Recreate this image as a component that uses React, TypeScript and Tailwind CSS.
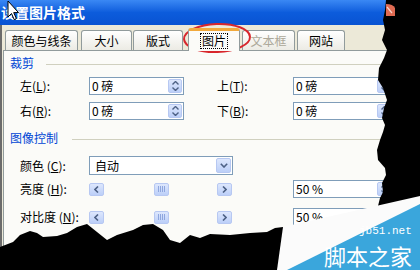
import React from "react";

const FONT = '"Noto Sans CJK SC", "Noto Sans", sans-serif';

function Tab({ label, w, ml, selected, disabled }: { label: string; w: number; ml: number; selected?: boolean; disabled?: boolean }) {
  if (selected) {
    return (
      <div
        style={{ width: w, marginLeft: ml }}
        className="relative z-10 -mb-px flex h-[23px] items-center justify-center rounded-t-[3px] border border-b-0 border-[#919b9c] border-t-[3px] border-t-[#f2a93b] bg-[#fbfbf8] text-[12px] text-black"
      >
        <span className="border border-dotted border-black px-[1px] leading-[14px]">{label}</span>
      </div>
    );
  }
  return (
    <div
      style={{ width: w, marginLeft: ml }}
      className={`flex h-[20px] items-center justify-center rounded-t-[3px] border border-b-0 border-[#919b9c] bg-linear-to-b from-[#ffffff] to-[#ecebe4] text-[12px] ${disabled ? "text-[#aca899]" : "text-black"}`}
    >
      {label}
    </div>
  );
}

function Label({ ch, k, w }: { ch: string; k: string; w: number }) {
  return (
    <div style={{ width: w }} className="shrink-0 text-[12px] leading-[14px] text-black">
      {ch}(<span className="underline">{k}</span>):
    </div>
  );
}

function Spinner() {
  return (
    <div className="absolute right-[1px] top-[1px] bottom-[1px] flex w-[14px] flex-col items-center justify-center gap-[2px] rounded-[2px] border border-[#b7c8f2] bg-linear-to-b from-[#dde7fd] to-[#bccff8]">
      <svg width="7" height="4" viewBox="0 0 7 4"><path d="M0.5 3.5 L3.5 0.5 L6.5 3.5" stroke="#4d6185" strokeWidth="1.4" fill="none" /></svg>
      <svg width="7" height="4" viewBox="0 0 7 4"><path d="M0.5 0.5 L3.5 3.5 L6.5 0.5" stroke="#4d6185" strokeWidth="1.4" fill="none" /></svg>
    </div>
  );
}

function NumBox({ value, w, h = 18 }: { value: string; w: number; h?: number }) {
  return (
    <div style={{ width: w, height: h }} className="relative shrink-0 border border-[#7f9db9] bg-white pl-[2px] text-[12px] leading-[16px] text-black">
      {value}
      <Spinner />
    </div>
  );
}

function ArrowBtn({ dir }: { dir: "l" | "r" }) {
  return (
    <div className="flex h-[13px] w-[15px] shrink-0 items-center justify-center rounded-[2px] border border-[#b7c8f2] bg-linear-to-b from-[#dde7fd] to-[#bccff8]">
      <svg width="5" height="7" viewBox="0 0 5 7">
        <path d={dir === "l" ? "M4 0.5 L1 3.5 L4 6.5" : "M1 0.5 L4 3.5 L1 6.5"} stroke="#4d6185" strokeWidth="1.6" fill="none" />
      </svg>
    </div>
  );
}

function ScrollBar() {
  return (
    <div className="flex h-[13px] w-[143px] shrink-0 items-center bg-[#fbfbf8]">
      <ArrowBtn dir="l" />
      <div className="ml-[50px] flex h-[13px] w-[15px] items-center justify-center gap-[1px] rounded-[2px] border border-[#b7c8f2] bg-linear-to-b from-[#dde7fd] to-[#bccff8]">
        <div className="h-[6px] w-px bg-[#8ea6de]" />
        <div className="h-[6px] w-px bg-[#8ea6de]" />
        <div className="h-[6px] w-px bg-[#8ea6de]" />
        <div className="h-[6px] w-px bg-[#8ea6de]" />
      </div>
      <div className="flex-1" />
      <ArrowBtn dir="r" />
    </div>
  );
}

function GroupTitle({ text, lineGap }: { text: string; lineGap: number }) {
  return (
    <div className="flex h-[14px] items-center pl-[6px]">
      <span className="text-[12px] leading-[14px] text-[#0046d5]">{text}</span>
      <div style={{ marginLeft: lineGap }} className="mt-[2px] h-px flex-1 bg-[#d0d0bf]" />
    </div>
  );
}

export default function App() {
  return (
    <div className="relative h-[270px] w-[420px] overflow-hidden bg-[#ece9d8]" style={{ fontFamily: FONT }}>
      {/* title bar */}
      <div className="flex h-[25px] items-center bg-linear-to-b from-[#3a88f4] via-[#0c5cdc] to-[#0953d2] pl-[1px] text-[14px] font-bold text-white">
        设置图片格式
      </div>

      {/* body */}
      <div className="flex h-[245px] flex-col border-l-2 border-[#6b6b6b]">
        {/* tabs */}
        <div className="ml-[3px] flex h-[25px] items-end">
          <Tab label="颜色与线条" w={73} ml={0} />
          <Tab label="大小" w={51} ml={3} />
          <Tab label="版式" w={50} ml={1} />
          <Tab label="图片" w={52} ml={5} selected />
          <Tab label="文本框" w={53} ml={2} disabled />
          <Tab label="网站" w={48} ml={2} />
        </div>

        {/* panel */}
        <div className="ml-[1px] flex-1 border-l border-t border-[#919b9c] bg-[#fbfbf8]">
          <div className="mt-[5px]">
            <GroupTitle text="裁剪" lineGap={12} />
          </div>

          <div className="mt-[7px] flex items-center pl-[16px]">
            <Label ch="左" k="L" w={69} />
            <NumBox value="0 磅" w={95} />
            <div className="w-[33px]" />
            <Label ch="上" k="T" w={76} />
            <NumBox value="0 磅" w={100} />
          </div>
          <div className="mt-[7px] flex items-center pl-[16px]">
            <Label ch="右" k="R" w={69} />
            <NumBox value="0 磅" w={95} />
            <div className="w-[33px]" />
            <Label ch="下" k="B" w={76} />
            <NumBox value="0 磅" w={100} />
          </div>

          <div className="mt-[11px]">
            <GroupTitle text="图像控制" lineGap={14} />
          </div>

          <div className="mt-[11px] flex items-center pl-[16px]">
            <Label ch="颜色 " k="C" w={69} />
            <div className="relative h-[19px] w-[144px] border border-[#7f9db9] bg-white pl-[5px] text-[12px] leading-[17px] text-black">
              自动
              <div className="absolute right-[1px] top-[1px] bottom-[1px] flex w-[15px] items-center justify-center rounded-[2px] border border-[#b7c8f2] bg-linear-to-b from-[#dde7fd] to-[#bccff8]">
                <svg width="8" height="5" viewBox="0 0 8 5"><path d="M0.8 0.8 L4 4 L7.2 0.8" stroke="#4d6185" strokeWidth="1.6" fill="none" /></svg>
              </div>
            </div>
          </div>

          <div className="mt-[5px] flex items-center pl-[16px]">
            <Label ch="亮度 " k="H" w={69} />
            <ScrollBar />
            <div className="w-[61px]" />
            <NumBox value="50 %" w={100} />
          </div>
          <div className="mt-[10px] flex items-center pl-[16px]">
            <Label ch="对比度 " k="N" w={69} />
            <ScrollBar />
            <div className="w-[61px]" />
            <NumBox value="50 %" w={100} />
          </div>
        </div>
      </div>

      {/* torn edges, highlight, watermark */}
      <svg className="pointer-events-none absolute inset-0" width="420" height="270" viewBox="0 0 420 270">
        <polygon
          fill="#000"
          points="386,0 385,10 383,20 385,30 382,40 387,50 384,58 379,68 378,80 383,88 387,100 384,108 382,118 385,125 383,132 380,140 377,150 378,160 385,168 386,175 382,183 383,192 380,198 378,206 420,206 420,0"
        />
        <polygon
          fill="#000"
          points="0,247 13,242 20,235 30,231 37,233 43,237 57,236 67,233 77,227 87,224 97,232 107,240 117,235 133,230 143,225 153,224 163,230 170,240 180,243 190,235 200,238 210,234 230,235 250,233 267,232 275,228 283,227 283,270 0,270"
        />
        <polygon fill="#fbfbfb" points="283,227 420,196 420,270 277,270" />
        <polygon fill="#3aa6dc" points="287,270 420,204 420,270" />
        <path d="M386 4 Q393 4 395 8 L395 16 L386 16 Z" fill="#df6a52" />
        <path d="M387 7 L392 13" stroke="#f7d5cc" strokeWidth="1.2" />
        <ellipse cx="217" cy="38" rx="33" ry="14" fill="none" stroke="#d8262c" strokeWidth="2" transform="rotate(-2 217 38)" />
        <path d="M8 1 L8 17 L11.5 13.5 L14.2 19.6 L16.4 18.6 L13.7 12.6 L18.5 12.6 Z" fill="#fff" stroke="#000" strokeWidth="1" strokeLinejoin="round" />
      </svg>

      <div className="absolute left-[359px] top-[225px] text-[11px] leading-[12px] text-white" style={{ fontFamily: '"Liberation Mono", monospace' }}>
        jb51.net
      </div>
      <div className="absolute left-[324px] top-[244px] text-[22px] leading-[22px] text-white" style={{ fontFamily: FONT }}>
        脚本之家
      </div>
    </div>
  );
}
